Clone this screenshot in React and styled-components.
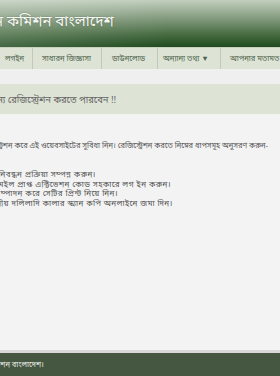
import React from 'react';
import styled, { createGlobalStyle } from 'styled-components';

const GlobalStyle = createGlobalStyle`
  html, body {
    margin: 0;
    padding: 0;
    background: #f3f3f3;
    overflow: hidden;
  }
  body {
    font-family: "Noto Sans Bengali", "Noto Sans", "Liberation Sans", sans-serif;
  }
`;

const Page = styled.div`
  width: 280px;
  height: 376px;
  display: flex;
  flex-direction: column;
  overflow: hidden;
  background: #f3f3f3;
`;

const Header = styled.header`
  height: 47px;
  flex-shrink: 0;
  display: flex;
  align-items: center;
  background:
    linear-gradient(90deg, rgba(255,255,255,0.16) 0%, rgba(255,255,255,0) 60%),
    linear-gradient(180deg, #c2cfbe 0%, #8aa085 35%, #456a40 75%, #1f4a1f 100%);
`;

const Title = styled.h1`
  margin: 0 0 4px -40px;
  font-size: 15px;
  font-weight: normal;
  color: #f4f6f0;
  white-space: nowrap;
  text-shadow: 0 0 2px rgba(0,0,0,0.3);
`;

const Nav = styled.nav`
  height: 21px;
  flex-shrink: 0;
  display: flex;
  align-items: stretch;
  background: #dde3d5;
  border-top: 1px solid #c9d1bf;
  box-shadow: 0 2px 2px rgba(0,0,0,0.18);
  white-space: nowrap;
`;

const NavItem = styled.a`
  display: flex;
  align-items: center;
  padding: 0 ${p => p.$right || 9}px 0 ${p => p.$left || 9}px;
  font-size: 7.6px;
  color: #4f634f;
  border-right: 1px solid #c2c9ba;
  flex-shrink: 0;
  text-decoration: none;
`;

const Gap = styled.div`
  height: 15px;
  flex-shrink: 0;
  background: #efefef;
`;

const Notice = styled.div`
  height: 30px;
  flex-shrink: 0;
  display: flex;
  align-items: center;
  background: #dde3d5;
  white-space: nowrap;
`;

const NoticeText = styled.p`
  margin: 2px 0 0 -53px;
  font-size: 9.4px;
  color: #676767;
`;

const Body = styled.main`
  flex: 1;
  padding-top: 27px;
  white-space: nowrap;
  color: #555;
`;

const Para = styled.p`
  margin: 0 0 20px -54px;
  font-size: 7.5px;
`;

const Steps = styled.ul`
  list-style: none;
  margin: 0;
  padding: 0;
  display: flex;
  flex-direction: column;
  font-size: 8px;
  letter-spacing: 0.4px;
  line-height: 9.5px;
`;

const Step = styled.li`
  margin-left: ${p => p.$shift}px;
`;

const Footer = styled.footer`
  height: 23px;
  flex-shrink: 0;
  display: flex;
  align-items: center;
  background: #455741;
  border-top: 3px solid #d9d9d9;
  color: #eef0ea;
  font-size: 7.5px;
  white-space: nowrap;
`;

const FooterText = styled.span`
  margin-left: -44px;
`;

const App = () => (
  <>
    <GlobalStyle />
    <Page>
      <Header>
        <Title>নির্বাচন কমিশন বাংলাদেশ</Title>
      </Header>
      <Nav>
        <NavItem $left={5} $right={8}>লগইন</NavItem>
        <NavItem $left={9} $right={10}>সাধারন জিজ্ঞাসা</NavItem>
        <NavItem $left={10} $right={12}>ডাউনলোড</NavItem>
        <NavItem $left={5} $right={11}>অন্যান্য তথ্য ▼</NavItem>
        <NavItem>আপনার মতামত</NavItem>
      </Nav>
      <Gap />
      <Notice>
        <NoticeText>আবেদনের জন্য রেজিস্ট্রেশন করতে পারবেন !!</NoticeText>
      </Notice>
      <Body>
        <Para>অনলাইনে রেজিস্ট্রেশন করে এই ওয়েবসাইটের সুবিধা নিন। রেজিস্ট্রেশন করতে নিম্নের ধাপসমূহ অনুসরণ করুন-</Para>
        <Steps>
          <Step $shift={-38}>অনলাইনে নিবন্ধন প্রক্রিয়া সম্পন্ন করুন।</Step>
          <Step $shift={-12}>ই-মেইল প্রাপ্ত এক্টিভেশন কোড সহকারে লগ ইন করুন।</Step>
          <Step $shift={-35}>আবেদন সম্পাদন করে সেটির প্রিন্ট নিয়ে নিন।</Step>
          <Step $shift={-28}>প্রয়োজনীয় দলিলাদি কালার স্ক্যান কপি অনলাইনে জমা দিন।</Step>
        </Steps>
      </Body>
      <Footer>
        <FooterText>© নির্বাচন কমিশন বাংলাদেশ।</FooterText>
      </Footer>
    </Page>
  </>
);

export default App;
